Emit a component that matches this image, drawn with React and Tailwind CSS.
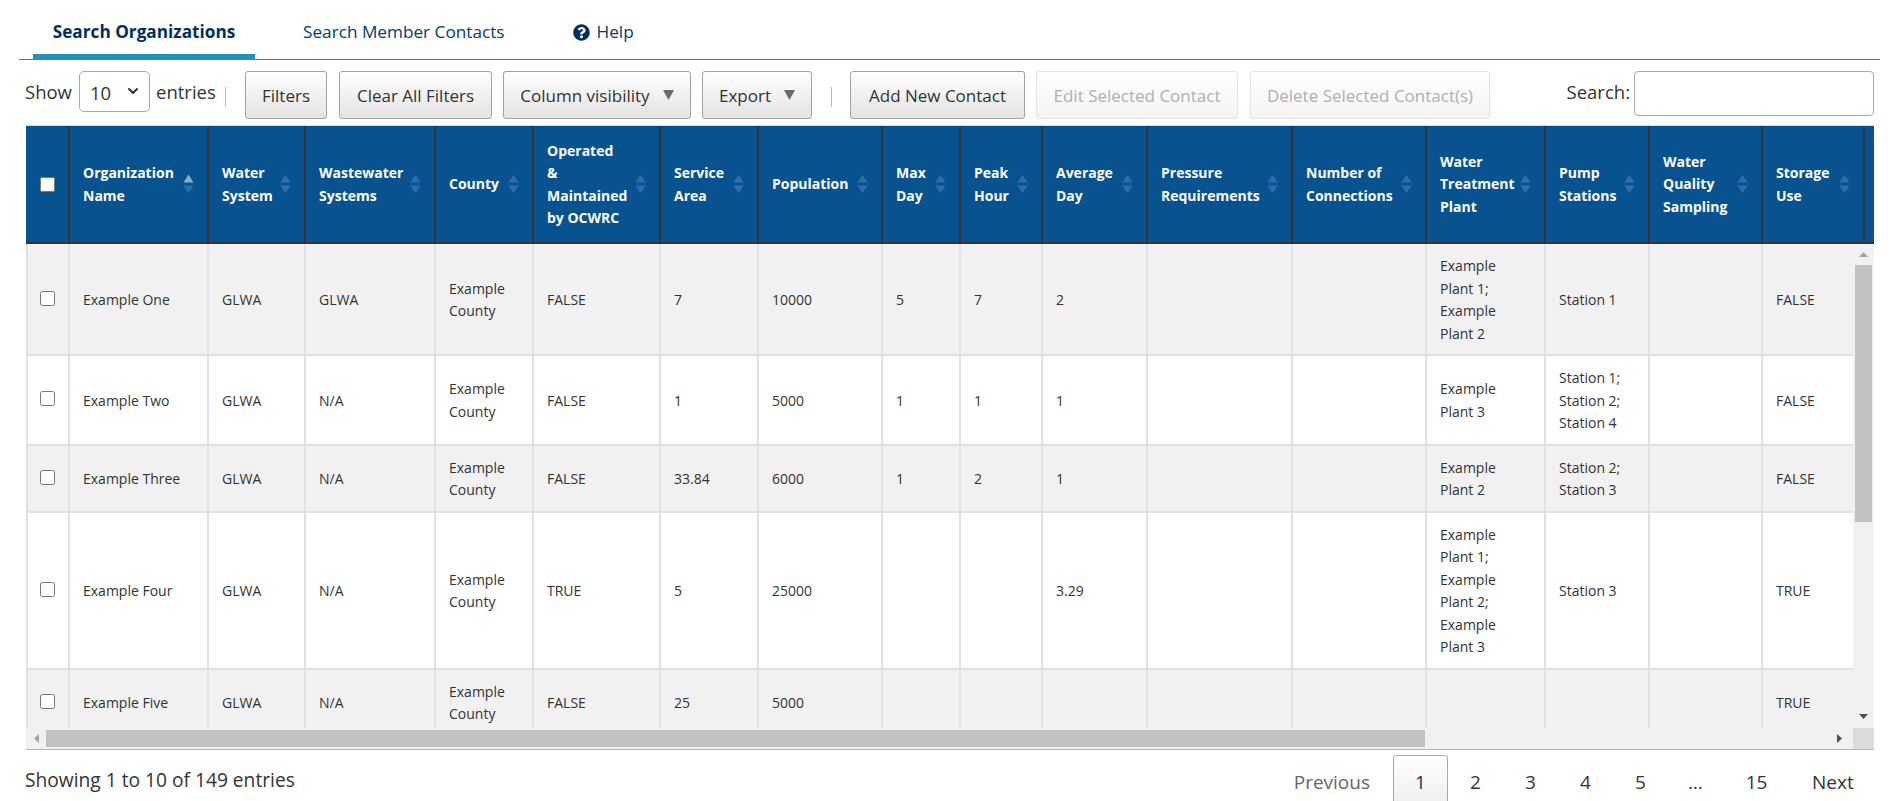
import { ChevronDown } from 'lucide-react';

const font = { fontFamily: '"Open Sans", "Noto Sans", sans-serif' };

const columns = [
  { w: 44, label: '' },
  { w: 139, label: 'Organization\nName', active: true },
  { w: 97, label: 'Water\nSystem' },
  { w: 130, label: 'Wastewater\nSystems' },
  { w: 98, label: 'County' },
  { w: 127, label: 'Operated\n&\nMaintained\nby OCWRC' },
  { w: 98, label: 'Service\nArea' },
  { w: 124, label: 'Population' },
  { w: 78, label: 'Max\nDay' },
  { w: 82, label: 'Peak\nHour' },
  { w: 105, label: 'Average\nDay' },
  { w: 145, label: 'Pressure\nRequirements' },
  { w: 134, label: 'Number of\nConnections' },
  { w: 119, label: 'Water\nTreatment\nPlant' },
  { w: 104, label: 'Pump\nStations' },
  { w: 113, label: 'Water\nQuality\nSampling' },
  { w: 102, label: 'Storage\nUse' },
  { w: 100, label: '' },
];

const rows = [
  ['Example One', 'GLWA', 'GLWA', 'Example\nCounty', 'FALSE', '7', '10000', '5', '7', '2', '', '', 'Example\nPlant 1;\nExample\nPlant 2', 'Station 1', '', 'FALSE'],
  ['Example Two', 'GLWA', 'N/A', 'Example\nCounty', 'FALSE', '1', '5000', '1', '1', '1', '', '', 'Example\nPlant 3', 'Station 1;\nStation 2;\nStation 4', '', 'FALSE'],
  ['Example Three', 'GLWA', 'N/A', 'Example\nCounty', 'FALSE', '33.84', '6000', '1', '2', '1', '', '', 'Example\nPlant 2', 'Station 2;\nStation 3', '', 'FALSE'],
  ['Example Four', 'GLWA', 'N/A', 'Example\nCounty', 'TRUE', '5', '25000', '', '', '3.29', '', '', 'Example\nPlant 1;\nExample\nPlant 2;\nExample\nPlant 3', 'Station 3', '', 'TRUE'],
  ['Example Five', 'GLWA', 'N/A', 'Example\nCounty', 'FALSE', '25', '5000', '', '', '', '', '', '', '', '', 'TRUE'],
];

const ColGroup = () => (
  <colgroup>
    {columns.map((c, i) => <col key={i} style={{ width: c.w }} />)}
  </colgroup>
);

const SortIcon = ({ active }) => (
  <svg width="11" height="20" viewBox="0 0 11 20" className="absolute right-[13px] top-1/2 -translate-y-1/2">
    <path d="M5.5 0.5L10.5 8.5H0.5Z" fill={active ? '#8eaecb' : '#2f6fa5'} />
    <path d="M5.5 19.5L10.5 11.5H0.5Z" fill="#2f6fa5" />
  </svg>
);

const Button = ({ children, disabled, caret, className = '' }) => (
  <button
    className={`flex h-[48px] shrink-0 items-center justify-center rounded-[3px] border pt-[2px] text-[17px] ${
      disabled
        ? 'border-[#e3e3e3] bg-gradient-to-b from-white to-[#f4f4f4] text-[#b0b0b0]'
        : 'border-[#a3a3a3] bg-gradient-to-b from-white to-[#e3e3e3] text-[#333]'
    } ${className}`}
  >
    {children}
    {caret && (
      <svg width="11" height="10" viewBox="0 0 11 10" className="mb-[2px] ml-[13px]">
        <path d="M0 0H11L5.500 10Z" fill="#6b6b6b" />
      </svg>
    )}
  </button>
);

const PageLink = ({ children, current, className = 'w-[55px]' }) => (
  <div
    className={`flex h-[58px] shrink-0 items-center justify-center pb-[4px] text-[#333] ${className} ${
      current ? 'rounded-t-[3px] border border-[#a9a9a9] bg-gradient-to-b from-white to-[#ececec]' : ''
    }`}
  >
    {children}
  </div>
);

export default function App() {
  return (
    <div style={font} className="h-[801px] w-[1893px] overflow-hidden bg-white text-[#333]">
      {/* tabs */}
      <div className="ml-[19px] mr-[13px] flex h-[60px] border-b-[1.5px] border-[#2d8bad] text-[17.2px]">
        <div className="ml-[14px] flex h-[59px] w-[222px] items-center justify-center border-b-[5px] border-[#2191b7] pt-[9px] font-bold text-[#002f5f]">
          Search Organizations
        </div>
        <div className="ml-[48px] flex items-center pt-[5px] text-[#003d6b]">Search Member Contacts</div>
        <div className="ml-[68px] flex items-center gap-[7px] pt-[5px] text-[#003d6b]">
          <svg width="17" height="17" viewBox="0 0 512 512" fill="#002f5f">
            <path d="M504 256c0 137-111 248-248 248S8 393 8 256 119 8 256 8s248 111 248 248zM262.7 90c-54.500 0-89.300 23-116.500 63.800-3.500 5.300-2.400 12.400 2.700 16.300l34.700 26.300c5.200 3.900 12.600 3 16.700-2.100 17.900-22.700 30.100-35.800 57.300-35.800 20.400 0 45.700 13.100 45.700 32.900 0 15-12.400 22.700-32.500 34-23.500 13.200-54.600 29.600-54.600 70.700V300c0 6.600 5.400 12 12 12h56c6.600 0 12-5.400 12-12v-1.300c0-28.500 83.200-29.700 83.200-106.700 0-58-60.200-102-116.700-102zM256 338c-25.400 0-46 20.600-46 46 0 25.400 20.600 46 46 46s46-20.600 46-46c0-25.400-20.600-46-46-46z" />
          </svg>
          Help
        </div>
      </div>

      {/* toolbar */}
      <div className="ml-[25px] mr-[19px] mt-[11px] flex h-[54px] items-start text-[18.5px]">
        <span className="mt-[7px] w-[54px] shrink-0">Show</span>
        <div className="relative flex h-[41px] w-[71px] shrink-0 items-center rounded-[5px] border border-[#aaa] pl-[10px] pt-[2px]">
          10
          <ChevronDown size={16} strokeWidth={3} className="absolute right-[8px] top-[11px]" />
        </div>
        <span className="ml-[6px] mt-[7px] w-[59px] shrink-0">entries</span>
        <div className="ml-[10px] mt-[16px] h-[20px] w-px shrink-0 bg-[#bbb]" />
        <Button className="ml-[19px] w-[82px]">Filters</Button>
        <Button className="ml-[12px] w-[153px]">Clear All Filters</Button>
        <Button caret className="ml-[11px] w-[188px]">Column visibility</Button>
        <Button caret className="ml-[11px] w-[110px]">Export</Button>
        <div className="ml-[19px] mt-[16px] h-[20px] w-px shrink-0 bg-[#bbb]" />
        <Button className="ml-[18px] w-[175px]">Add New Contact</Button>
        <Button disabled className="ml-[11px] w-[202px]">Edit Selected Contact</Button>
        <Button disabled className="ml-[12px] w-[240px]">Delete Selected Contact(s)</Button>
        <span className="ml-auto mt-[7px]">Search:</span>
        <input className="ml-[4px] h-[45px] w-[240px] rounded-[4px] border border-[#aaa] bg-white" />
      </div>

      {/* table */}
      <div className="ml-[26px] w-[1848px] border-b border-[#b5b5b5] text-[14px] leading-[22.5px]">
        <div className="overflow-hidden border-t border-[#dcdcdc]">
          <table className="w-[1939px] table-fixed border-separate border-spacing-0">
            <ColGroup />
            <thead>
              <tr>
                {columns.map((c, i) => (
                  <th
                    key={i}
                    className="relative h-[118px] whitespace-pre-line border-b-2 border-r-2 border-[#333] bg-[#08528f] pl-[13px] pr-[4px] pt-[1px] text-left align-middle text-[14px] font-bold text-white"
                  >
                    {i === 0 ? <input type="checkbox" className="ml-[1px] block h-[15px] w-[15px]" /> : c.label}
                    {i > 0 && i < 17 && <SortIcon active={c.active} />}
                  </th>
                ))}
              </tr>
            </thead>
          </table>
        </div>
        <div className="flex h-[484px]">
          <div className="w-[1827px] overflow-hidden border-l-2 border-[#dee2e6]">
            <table className="w-[1937px] table-fixed border-separate border-spacing-0">
              <colgroup>
                <col style={{ width: 42 }} />
                {columns.slice(1).map((c, i) => <col key={i} style={{ width: c.w }} />)}
              </colgroup>
              <tbody>
                {rows.map((row, r) => (
                  <tr key={r} className={r % 2 === 0 ? 'bg-[#f1f1f1]' : 'bg-white'}>
                    <td className="border-b-2 border-r-2 border-[#dee2e6] pl-[12px] align-middle">
                      <input type="checkbox" className="mb-[2px] block h-[15px] w-[15px]" />
                    </td>
                    {row.map((cell, c) => (
                      <td
                        key={c}
                        className="whitespace-pre-line border-b-2 border-r-2 border-[#dee2e6] pb-[9px] pl-[13px] pt-[11px] align-middle text-[#333]"
                      >
                        {cell}
                      </td>
                    ))}
                    <td className="border-b-2 border-[#dee2e6]" />
                  </tr>
                ))}
              </tbody>
            </table>
          </div>
          {/* vertical scrollbar */}
          <div className="flex w-[21px] flex-col items-center bg-[#f1f1f1]">
            <svg width="11" height="21" viewBox="0 0 11 21"><path d="M5.500 8L10 13H1Z" fill="#a3a3a3" /></svg>
            <div className="h-[257px] w-[17px] bg-[#c1c1c1]" />
            <svg width="11" height="10" viewBox="0 0 11 10" className="mt-auto mb-[8px]"><path d="M5.500 9L10 4H1Z" fill="#505050" /></svg>
          </div>
        </div>
        {/* horizontal scrollbar */}
        <div className="flex h-[21px] items-center bg-[#f1f1f1]">
          <svg width="20" height="21" viewBox="0 0 20 21"><path d="M8 10.500L13 6V15Z" fill="#a3a3a3" /></svg>
          <div className="h-[17px] w-[1379px] bg-[#c1c1c1]" />
          <svg width="21" height="21" viewBox="0 0 21 21" className="ml-auto mr-[3px]"><path d="M13 10.500L8 6V15Z" fill="#505050" /></svg>
          <div className="h-[21px] w-[21px] bg-[#dcdcdc]" />
        </div>
      </div>

      {/* footer */}
      <div className="ml-[25px] mr-[40px] mt-[5px] flex items-start justify-between text-[19px]">
        <div className="mt-[11px] text-[19.2px]">Showing 1 to 10 of 149 entries</div>
        <div className="flex items-start">
          <div className="mr-[23px] mt-[13px] text-[#666]">Previous</div>
          <PageLink current>1</PageLink>
          <PageLink>2</PageLink>
          <PageLink>3</PageLink>
          <PageLink>4</PageLink>
          <PageLink>5</PageLink>
          <PageLink>…</PageLink>
          <PageLink className="w-[67px]">15</PageLink>
          <div className="ml-[22px] mt-[13px] w-[41px] whitespace-nowrap">Next</div>
        </div>
      </div>
    </div>
  );
}
